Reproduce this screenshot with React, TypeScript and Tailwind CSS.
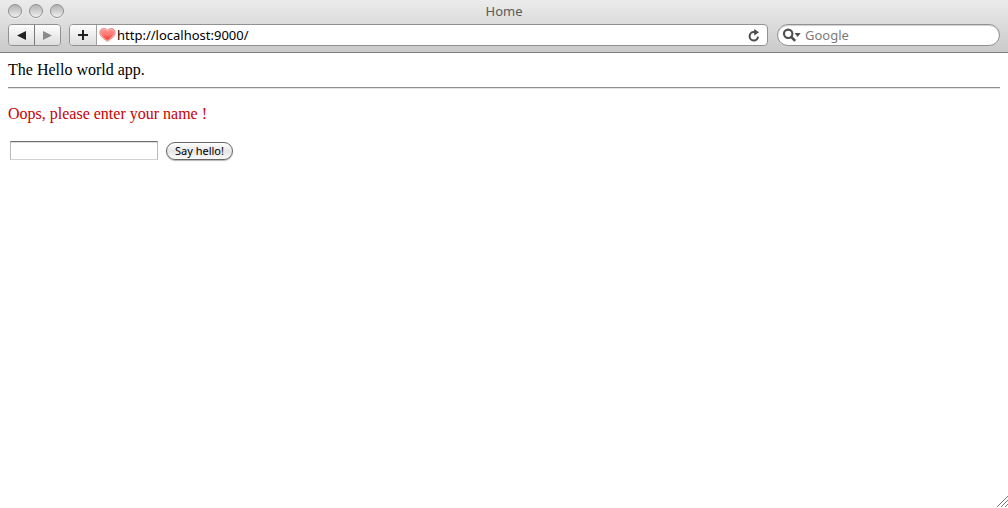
import React, { useState } from "react";
import { clsx } from "clsx";

const WindowButton: React.FC<{ label: string }> = ({ label }) => (
  <button
    type="button"
    aria-label={label}
    className="size-3.5 rounded-full border border-[#8f8f8f] bg-linear-to-b from-[#b4b4b4] via-[#cfcfcf] to-[#f0f0f0] shadow-[0_1px_0_#f4f4f4]"
  />
);

interface ToolButtonProps {
  label: string;
  className?: string;
}

const ToolButton: React.FC<React.PropsWithChildren<ToolButtonProps>> = ({
  label,
  className,
  children,
}) => (
  <button
    type="button"
    aria-label={label}
    className={clsx(
      "flex h-full items-center justify-center bg-linear-to-b from-[#fdfdfd] to-[#dedede]",
      className
    )}
  >
    {children}
  </button>
);

const HeartIcon = () => (
  <svg width="17" height="16" viewBox="0 0 18 16" className="shrink-0">
    <defs>
      <linearGradient id="heart" x1="0" y1="0" x2="0" y2="1">
        <stop offset="0" stopColor="#ff8f8b" />
        <stop offset="0.45" stopColor="#ff7772" />
        <stop offset="1" stopColor="#ee3932" />
      </linearGradient>
    </defs>
    <path
      d="M9 14.8C6 12.6 0.8 9.8 0.8 5.4C0.8 2.8 2.6 1.2 4.9 1.2C6.7 1.2 8.2 1.8 9 2.9C9.8 1.8 11.3 1.2 13.1 1.2C15.4 1.2 17.2 2.8 17.2 5.4C17.2 9.8 12 12.6 9 14.8Z"
      fill="#f9b9b5"
      stroke="#d9706b"
      strokeWidth="0.8"
    />
    <path
      d="M9 13.4C6.5 11.6 2.1 9 2.1 5.4C2.1 3.5 3.4 2.5 5 2.5C6.8 2.5 8.2 3.3 9 4.6C9.8 3.3 11.2 2.5 13 2.5C14.6 2.5 15.9 3.5 15.9 5.4C15.9 9 11.5 11.6 9 13.4Z"
      fill="url(#heart)"
    />
  </svg>
);

const ReloadIcon = () => (
  <svg width="12" height="13" viewBox="0 0 12 13">
    <path
      d="M7.5 3.1H5.8A4.2 4.2 0 1 0 10 7.6"
      fill="none"
      stroke="#4d4d4d"
      strokeWidth="2"
    />
    <path d="M6.2 0L11 3.3L6.2 6.6Z" fill="#4d4d4d" />
  </svg>
);

const SearchIcon = () => (
  <svg width="18" height="14" viewBox="0 0 18 14" className="shrink-0">
    <circle cx="5.2" cy="5.8" r="4.2" fill="none" stroke="#4d4d4d" strokeWidth="2.1" />
    <path d="M8.2 8.8L12.2 12.8" stroke="#4d4d4d" strokeWidth="2.6" />
    <path d="M11.6 5H17.6L14.6 9Z" fill="#4d4d4d" />
  </svg>
);

const BrowserBar = () => {
  const [url, setUrl] = useState("http://localhost:9000/");

  return (
    <header className="border-b border-[#7c7c7c] bg-linear-to-b from-[#ececec] to-[#cacaca] pb-1.5 font-['Noto_Sans','Open_Sans',sans-serif] text-[13px]">
      <div className="grid h-6 grid-cols-[1fr_auto_1fr] items-center px-2">
        <div className="flex gap-[7px] pb-0.5">
          <WindowButton label="Close" />
          <WindowButton label="Minimize" />
          <WindowButton label="Zoom" />
        </div>
        <h1 className="text-[#5a5a5a]">Home</h1>
      </div>
      <div className="flex h-[22px] px-2">
        <div className="flex w-[53px] overflow-hidden rounded border border-[#919191]">
          <ToolButton label="Back" className="flex-1 border-r border-[#7a7a7a]">
            <svg width="9" height="9" viewBox="0 0 9 9">
              <path d="M0 4.5L9 0V9Z" fill="#222" />
            </svg>
          </ToolButton>
          <ToolButton label="Forward" className="flex-1">
            <svg width="9" height="9" viewBox="0 0 9 9">
              <path d="M9 4.5L0 0V9Z" fill="#8b8b8b" />
            </svg>
          </ToolButton>
        </div>
        <div className="ml-2 flex flex-1 overflow-hidden rounded border border-[#919191] bg-white">
          <ToolButton
            label="Add bookmark"
            className="w-[27px] border-r border-[#a0a0a0]"
          >
            <svg width="10" height="10" viewBox="0 0 10 10">
              <path d="M5 0V10M0 5H10" stroke="#222" strokeWidth="2" />
            </svg>
          </ToolButton>
          <div className="flex min-w-0 flex-1 items-center pr-[7px] pl-0.5">
            <HeartIcon />
            <input
              type="text"
              aria-label="Address"
              value={url}
              onChange={(e) => setUrl(e.target.value)}
              className="min-w-0 flex-1 pt-0.5 pl-px text-black outline-none"
            />
            <button type="button" aria-label="Reload">
              <ReloadIcon />
            </button>
          </div>
        </div>
        <label className="ml-[9px] flex w-[223px] items-center rounded-full border border-[#919191] bg-white pr-3 pl-[5px] shadow-[inset_0_1px_1px_#d0d0d0]">
          <SearchIcon />
          <input
            type="text"
            aria-label="Search Google"
            placeholder="Google"
            className="ml-1 min-w-0 flex-1 pt-0.5 outline-none placeholder:text-[#7c7c7c]"
          />
        </label>
      </div>
    </header>
  );
};

const HelloForm = () => {
  const [name, setName] = useState("");

  return (
    <form
      className="mt-[18px] flex items-center gap-2 pl-0.5"
      onSubmit={(e) => e.preventDefault()}
    >
      <input
        type="text"
        name="myName"
        aria-label="Your name"
        value={name}
        onChange={(e) => setName(e.target.value)}
        className="h-[19px] w-[148px] border border-t-[#6f6f6f] border-r-[#b8b8b8] border-b-[#d2d2d2] border-l-[#b8b8b8] bg-white px-1 text-[13px] shadow-[inset_0_1px_0_#dedede] outline-none"
      />
      <button
        type="submit"
        className="h-[18px] rounded-full border border-[#666] bg-linear-to-b from-white via-[#e6e6e6] to-[#fafafa] px-2 font-['Noto_Sans','Open_Sans',sans-serif] text-[11px] leading-4 text-black shadow-[0_1px_1px_#b5b5b5]"
      >
        Say hello!
      </button>
    </form>
  );
};

export default function App() {
  return (
    <div className="flex min-h-screen flex-col bg-white">
      <BrowserBar />
      <main className="flex-1 px-2 pt-2 font-['Liberation_Serif',serif] text-base leading-[18px] text-black">
        <p>The Hello world app.</p>
        <hr className="mt-2 h-0.5 border-t border-b border-t-[#8f8f8f] border-b-[#e4e4e4]" />
        <p className="mt-4 text-[#c90000]">Oops, please enter your name !</p>
        <HelloForm />
      </main>
      <svg width="12" height="12" viewBox="0 0 12 12" className="self-end">
        <path
          d="M1 11L12 0M5 11L12 4M9 11L12 8"
          stroke="#777"
          strokeWidth="1"
        />
      </svg>
    </div>
  );
}
